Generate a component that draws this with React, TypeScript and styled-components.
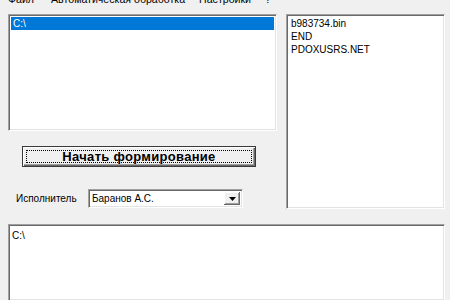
import React from "react";
import styled, { createGlobalStyle } from "styled-components";

const Global = createGlobalStyle`
  html, body { margin: 0; padding: 0; background: #f0f0f0; }
  body { font-family: "Liberation Sans", Arial, sans-serif; font-size: 10px; color: #000; overflow: hidden; }
`;

const Window = styled.div`
  width: 450px;
  height: 300px;
  background: #f0f0f0;
  display: flex;
  flex-direction: column;
  overflow: hidden;
`;

const MenuBar = styled.div`
  height: 5px;
  overflow: hidden;
  display: flex;
  align-items: flex-end;
  padding-left: 8px;
  font-size: 10.6px;
  color: #000;
`;

const MenuItem = styled.span<{ $gap: number }>`
  display: block;
  line-height: 12px;
  margin-bottom: 0;
  margin-right: ${(p) => p.$gap}px;
  white-space: nowrap;
`;

const sunken = `
  border-top: 1px solid #a0a0a0;
  border-left: 1px solid #a0a0a0;
  border-right: 1px solid #ffffff;
  border-bottom: 1px solid #ffffff;
  box-shadow: inset 1px 1px 0 #696969, inset -1px -1px 0 #e3e3e3;
  background: #ffffff;
  box-sizing: border-box;
`;

const TopSection = styled.div`
  display: flex;
  margin-top: 9px;
  padding-left: 8px;
  gap: 9px;
`;

const LeftColumn = styled.div`
  width: 269px;
  display: flex;
  flex-direction: column;
`;

const ListBox = styled.div<{ $w?: number; $h: number }>`
  ${sunken}
  width: ${(p) => (p.$w ? `${p.$w}px` : "100%")};
  height: ${(p) => p.$h}px;
  padding: 2px 2px;
  overflow: hidden;
`;

const ListItem = styled.div<{ $selected?: boolean }>`
  height: 13px;
  line-height: 13px;
  padding-left: 2px;
  white-space: nowrap;
  background: ${(p) => (p.$selected ? "#0078d7" : "transparent")};
  color: ${(p) => (p.$selected ? "#ffffff" : "#000000")};
`;

const Button = styled.button`
  margin: 15px 0 0 14px;
  width: 234px;
  height: 21px;
  padding: 0;
  border: 1px solid #3a3a3a;
  background: #f0f0f0;
  box-shadow: inset 1px 1px 0 #ffffff, inset -1px -1px 0 #696969, inset -2px -2px 0 #a0a0a0;
  font-family: "Liberation Sans", Arial, sans-serif;
  font-weight: bold;
  font-size: 13px;
  letter-spacing: 0.3px;
  color: #000;
  display: flex;
  align-items: stretch;
  justify-content: stretch;
  box-sizing: border-box;
`;

const FocusRect = styled.span`
  flex: 1;
  margin: 3px;
  border: 1px dotted #000;
  display: flex;
  align-items: center;
  justify-content: center;
  line-height: 12px;
`;

const ComboRow = styled.div`
  display: flex;
  align-items: center;
  margin-top: 22px;
  padding-left: 8px;
  gap: 11px;
`;

const Label = styled.span`
  font-size: 10px;
  white-space: nowrap;
  width: 61px;
`;

const Combo = styled.div`
  ${sunken}
  width: 155px;
  height: 19px;
  display: flex;
  align-items: stretch;
  padding: 2px;
`;

const ComboText = styled.span`
  flex: 1;
  line-height: 14px;
  padding-left: 1px;
  white-space: nowrap;
`;

const ArrowButton = styled.span`
  width: 16px;
  background: #f0f0f0;
  box-shadow: inset -1px -1px 0 #696969, inset 1px 1px 0 #ffffff, inset -2px -2px 0 #a0a0a0;
  display: flex;
  align-items: center;
  justify-content: center;
`;

const BottomBox = styled.div`
  ${sunken}
  margin: 15px 0 0 8px;
  width: 437px;
  flex: 1;
  padding: 4px 3px;
  border-bottom: none;
`;

const Line = styled.div`
  line-height: 13px;
  white-space: nowrap;
`;

const menu: [string, number][] = [
  ["Файл", 17],
  ["Автоматическая обработка", 14],
  ["Настройки", 14],
  ["?", 0],
];

export default function App() {
  return (
    <Window>
      <Global />
      <MenuBar>
        {menu.map(([t, g]) => (
          <MenuItem key={t} $gap={g}>
            {t}
          </MenuItem>
        ))}
      </MenuBar>
      <TopSection>
        <LeftColumn>
          <ListBox $h={117}>
            <ListItem $selected>C:\</ListItem>
          </ListBox>
          <Button>
            <FocusRect>Начать формирование</FocusRect>
          </Button>
          <ComboRow>
            <Label>Исполнитель</Label>
            <Combo>
              <ComboText>Баранов А.С.</ComboText>
              <ArrowButton>
                <svg width="7" height="4" viewBox="0 0 7 4">
                  <path d="M0 0 H7 L3.5 4 Z" fill="#000" />
                </svg>
              </ArrowButton>
            </Combo>
          </ComboRow>
        </LeftColumn>
        <ListBox $w={159} $h={195}>
          <ListItem>b983734.bin</ListItem>
          <ListItem>END</ListItem>
          <ListItem>PDOXUSRS.NET</ListItem>
        </ListBox>
      </TopSection>
      <BottomBox>
        <Line>C:\</Line>
      </BottomBox>
    </Window>
  );
}
